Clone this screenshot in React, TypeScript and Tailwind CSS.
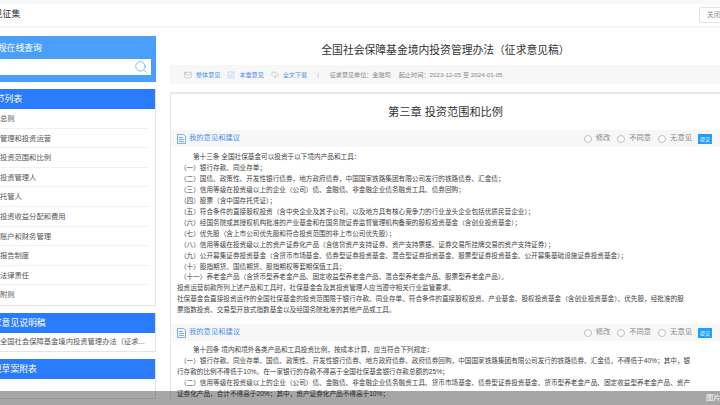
import { CloudDownload, Mail, Search, SquarePen } from "lucide-react";

const chapters = [
  "第一章 总则",
  "第二章 管理和投资运营",
  "第三章 投资范围和比例",
  "第四章 投资管理人",
  "第五章 托管人",
  "第六章 投资收益分配和费用",
  "第七章 账户和财务管理",
  "第八章 报告制度",
  "第九章 法律责任",
  "第十章 附则",
];

const article13 = [
  { text: "第十三条 全国社保基金可以投资于以下境内产品和工具：", cls: "pl-[16px]" },
  { text: "（一）银行存款、同业存单；", cls: "pl-[3px]" },
  { text: "（二）国债、政策性、开发性银行债券，地方政府债券，中国国家铁路集团有限公司发行的铁路债券、汇金债；", cls: "pl-[3px]" },
  { text: "（三）信用等级在投资级以上的企业（公司）债、金融债、非金融企业债务融资工具、债券回购；", cls: "pl-[3px]" },
  { text: "（四）股票（含中国存托凭证）；", cls: "pl-[3px]" },
  { text: "（五）符合条件的直接股权投资（含中央企业及其子公司，以及地方具有核心竞争力的行业龙头企业包括优质民营企业）；", cls: "pl-[3px]" },
  { text: "（六）经国务院或其授权机构批准的产业基金和在国务院证券监督管理机构备案的股权投资基金（含创业投资基金）；", cls: "pl-[3px]" },
  { text: "（七）优先股（含上市公司优先股和符合投资范围的非上市公司优先股）；", cls: "pl-[3px]" },
  { text: "（八）信用等级在投资级以上的资产证券化产品（含信贷资产支持证券、资产支持票据、证券交易所挂牌交易的资产支持证券）；", cls: "pl-[3px]" },
  { text: "（九）公开募集证券投资基金（含货币市场基金、债券型证券投资基金、混合型证券投资基金、股票型证券投资基金、公开募集基础设施证券投资基金）；", cls: "pl-[3px]" },
  { text: "（十）股指期货、国债期货、股指期权等套期保值工具；", cls: "pl-[3px]" },
  { text: "（十一）养老金产品（含货币型养老金产品、固定收益型养老金产品、混合型养老金产品、股票型养老金产品）。", cls: "pl-[3px]" },
  { text: "投资运营前款所列上述产品和工具时，社保基金会及其投资管理人应当遵守相关行业监管要求。", cls: "" },
  { text: "社保基金会直接投资运作的全国社保基金的投资范围限于银行存款、同业存单、符合条件的直接股权投资、产业基金、股权投资基金（含创业投资基金）、优先股，经批准的股", cls: "" },
  { text: "票指数投资、交易型开放式指数基金以及经国务院批准的其他产品或工具。", cls: "" },
];

const article14 = [
  { text: "第十四条 境内和境外各类产品和工具投资比例，按成本计算，应当符合下列规定：", cls: "pl-[16px]" },
  { text: "（一）银行存款、同业存单、国债、政策性、开发性银行债券、地方政府债券、政府债券回购，中国国家铁路集团有限公司发行的铁路债券、汇金债，不得低于40%；其中，银", cls: "pl-[3px]" },
  { text: "行存款的比例不得低于10%。在一家银行的存款不得高于全国社保基金银行存款总额的25%；", cls: "" },
  { text: "（二）信用等级在投资级以上的企业（公司）债、金融债、非金融企业债务融资工具、货币市场基金、债券型证券投资基金、货币型养老金产品、固定收益型养老金产品、资产", cls: "pl-[3px]" },
  { text: "证券化产品，合计不得高于20%；其中，资产证券化产品不得高于10%；", cls: "" },
];

function SideTitle({ children, className }: { children: string; className: string }) {
  return (
    <div className={`h-[20px] bg-[#2b7bff] text-[8.8px] leading-[20px] text-white whitespace-nowrap ${className}`}>
      {children}
    </div>
  );
}

function Radio({ label }: { label: string }) {
  return (
    <label className="flex items-center gap-[4px]">
      <span className="h-[8px] w-[8px] rounded-full border border-[#bdbdbd] bg-white" />
      <span>{label}</span>
    </label>
  );
}

function OpinionBar() {
  return (
    <div className="flex h-[17px] items-center bg-[#f7f7f7] pl-[6px] pr-[10px]">
      <svg width="9" height="10" viewBox="0 0 9 10" fill="none" stroke="#5b9cf5" strokeWidth="0.8">
        <path d="M.5.5h6l2 1.5v7.5h-8z" />
        <path d="M2 3.5h4M2 5.5h5M2 7.5h5" />
      </svg>
      <span className="ml-[3px] text-[7.3px] text-[#4a8ff0]">我的意见和建议</span>
      <div className="ml-auto flex items-center gap-[7px] text-[7.3px] text-[#888888]">
        <Radio label="修改" />
        <Radio label="不同意" />
        <Radio label="无意见" />
        <button className="ml-[-1px] h-[10px] w-[14px] bg-[#1e9fff] text-[5px] leading-[10px] text-white">提交</button>
      </div>
    </div>
  );
}

function Lines({ rows }: { rows: { text: string; cls: string }[] }) {
  return (
    <div className="px-[6px] text-[6.63px] leading-[10.95px] text-[#444444]">
      {rows.map((r) => (
        <div key={r.text} className={`whitespace-nowrap ${r.cls}`}>
          {r.text}
        </div>
      ))}
    </div>
  );
}

export default function App() {
  return (
    <div className="relative h-[405px] w-[720px] overflow-hidden bg-white font-['Liberation_Sans','Noto_Sans_CJK_SC',sans-serif]">
      <div className="h-[4px] bg-[#f7f8fa]" />
      <header className="flex h-[24px] items-center justify-between overflow-hidden border-b-2 border-[#f7f7f7] pb-[1px]">
        <span className="-ml-[15px] text-[8.8px] text-[#333333]">意见征集</span>
        <button className="-mr-[10px] h-[16px] w-[31px] rounded-[2px] border border-[#e2e2e2] pl-[7px] text-left text-[6.5px] text-[#888888] whitespace-nowrap">关闭</button>
      </header>

      <div className="flex pt-[8px]">
        <aside className="w-[156px] shrink-0 overflow-hidden">
          <div className="-ml-[44px] flex w-[200px] flex-col gap-[7px]">
            <div className="flex h-[46px] flex-col bg-[#4a9ffc] pl-[33px] pr-[5px]">
              <div className="h-[23px] text-[8.8px] leading-[24px] text-white">法规在线查询</div>
              <div className="flex h-[16px] items-center justify-end bg-white pr-[3px]">
                <Search size={14} strokeWidth={1.2} color="#4a9ffc" />
              </div>
            </div>

            <div className="border-b border-r border-[#e5e5e5]">
              <SideTitle className="pl-[31px]">章节列表</SideTitle>
              <ul className="pl-[20px] pr-[7px] text-[7.3px] text-[#555555]">
                {chapters.map((c, i) => (
                  <li key={c} className={`h-[19.6px] leading-[19px] whitespace-nowrap ${i < chapters.length - 1 ? "border-b border-[#f1f1f1]" : ""}`}>
                    {c}
                  </li>
                ))}
              </ul>
            </div>

            <div className="border-b border-r border-[#e5e5e5]">
              <SideTitle className="pl-[28px]">征求意见说明稿</SideTitle>
              <div className="h-[18px] overflow-hidden pl-[44px] text-[7.3px] leading-[18px] text-[#555555] whitespace-nowrap">
                全国社会保障基金境内投资管理办法（征求...
              </div>
            </div>

            <div className="h-[40px] border-b border-r border-[#e5e5e5]">
              <SideTitle className="pl-[28px]">法规草案附表</SideTitle>
            </div>
          </div>
        </aside>

        <main className="ml-[14px] w-[552px] shrink-0">
          <h1 className="h-[29px] pr-[1px] text-center text-[10.8px] leading-[28px] font-normal text-[#333333] whitespace-nowrap">
            全国社会保障基金境内投资管理办法（征求意见稿）
          </h1>
          <div className="flex h-[19px] items-center bg-[#f7f7f7] pl-[14px] text-[6.1px] whitespace-nowrap">
            <Mail size={8} strokeWidth={1} color="#888888" />
            <span className="ml-[4px] text-[#4a8ff0]">整体意见</span>
            <SquarePen size={8} strokeWidth={1} color="#5b9cf5" className="ml-[7px]" />
            <span className="ml-[4px] text-[#4a8ff0]">本章意见</span>
            <CloudDownload size={8} strokeWidth={1} color="#888888" className="ml-[7px]" />
            <span className="ml-[4px] text-[#4a8ff0]">全文下载</span>
            <span className="ml-[10px] text-[#aaaaaa]">|</span>
            <span className="ml-[11px] text-[#888888]">征求意见单位：金融司</span>
            <span className="ml-[8px] text-[6.2px] text-[#888888]">起止时间：2023-12-05 至 2024-01-05</span>
          </div>

          <section className="mt-[8px] border-l border-t-2 border-[#e8e8e8]">
            <h2 className="h-[36px] pr-[2px] text-center text-[11.2px] leading-[37px] font-normal text-[#333333]">第三章 投资范围和比例</h2>
            <OpinionBar />
            <div className="h-[177px] pt-[5px]">
              <Lines rows={article13} />
            </div>
            <OpinionBar />
            <div className="pt-[4px]">
              <Lines rows={article14} />
            </div>
          </section>
        </main>
      </div>

      <div className="absolute inset-x-0 bottom-0 flex h-[14px] items-center justify-end overflow-hidden bg-black/35 text-[7.3px] text-white">
        <span className="-mr-[1px] w-[15px] whitespace-nowrap">图片</span>
      </div>
    </div>
  );
}
